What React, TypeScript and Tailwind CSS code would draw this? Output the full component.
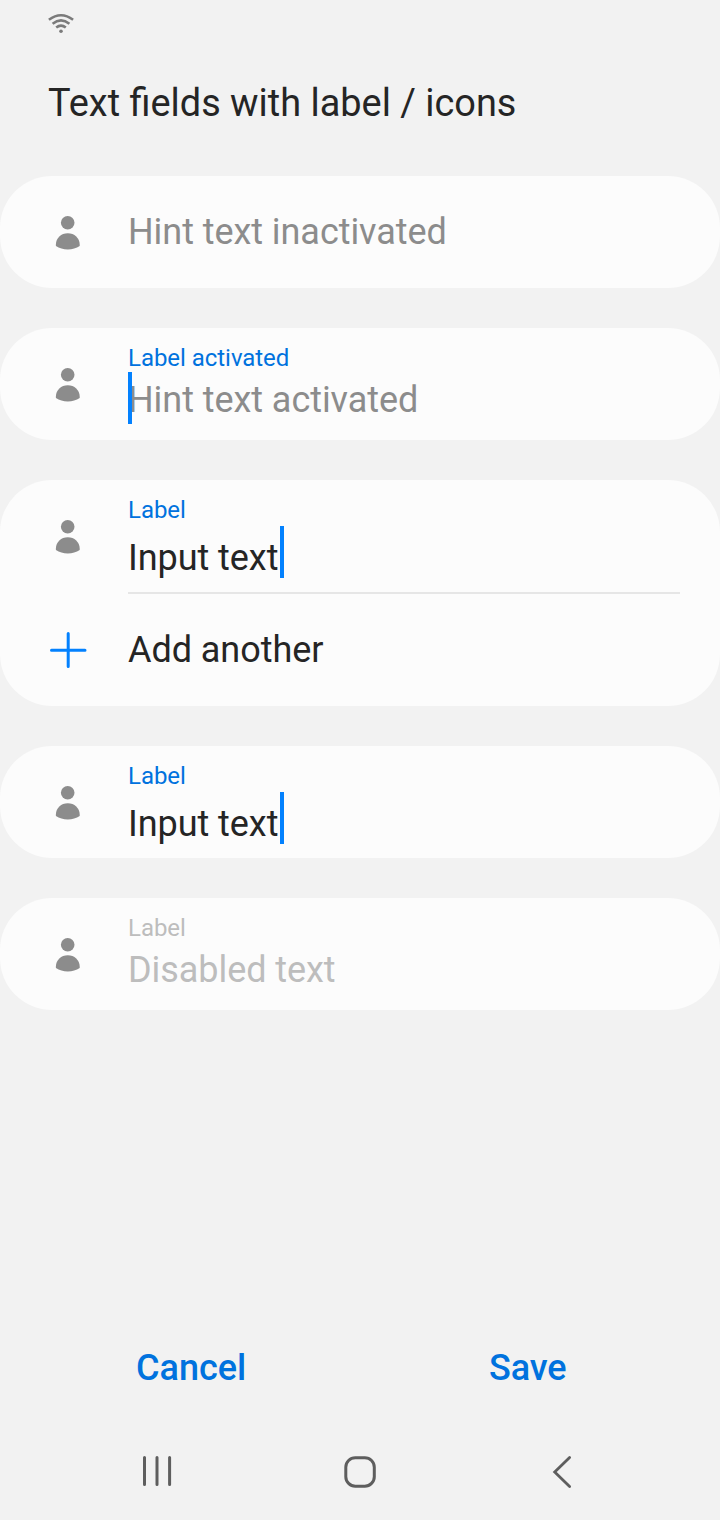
import React from "react";

function Person() {
  return (
    <svg className="block h-12 w-12" viewBox="0 0 48 48" fill="#8c8c8c">
      <circle cx="23.7" cy="14.7" r="6.8" />
      <path d="M11.9 36.6C11.9 30 17.2 25.2 23.8 25.2S35.7 30 35.7 36.6v1.5c-3.4 2.3-7.4 3.4-11.9 3.4s-8.5-1.1-11.9-3.4z" />
    </svg>
  );
}

function Caret({ className = "" }: { className?: string }) {
  return <span className={"relative z-10 block h-[52px] w-1 shrink-0 bg-[#0381fe] " + className} />;
}

type FieldProps = {
  label?: string;
  text: string;
  color: string;
  labelColor?: string;
  caret?: "start" | "end";
  rowClass?: string;
  textClass?: string;
};

function Field({ label, text, color, labelColor = "", caret, rowClass = "", textClass = "" }: FieldProps) {
  return (
    <div className="flex h-28 items-start pl-11">
      <div className="mt-8 w-[84px] shrink-0">
        <Person />
      </div>
      <div className="flex min-w-0 flex-1 flex-col">
        {label && <span className={"mt-4 h-7 text-[24px] leading-7 tracking-[-0.04px] " + labelColor}>{label}</span>}
        <div className={"flex h-[52px] text-[36px] leading-[52px] tracking-[-0.06px] whitespace-nowrap " + color + " " + rowClass}>
          {caret === "start" && <Caret className="-mr-1" />}
          <span className={textClass}>{text}</span>
          {caret === "end" && <Caret className="ml-[1.5px]" />}
        </div>
      </div>
    </div>
  );
}

function InputField() {
  return (
    <Field
      label="Label"
      labelColor="text-[#0072de]"
      text="Input text"
      color="text-[#252525]"
      caret="end"
      rowClass="mt-[2px]"
      textClass="pt-1.5"
    />
  );
}

const card = "rounded-[52px] bg-[#fcfcfc]";

export default function App() {
  return (
    <div className="flex h-[1520px] w-[720px] flex-col overflow-hidden bg-[#f2f2f2] font-['Roboto',sans-serif] text-[#252525]">
      <header className="flex h-12 shrink-0 items-start pl-12 pt-3">
        <svg className="h-6 w-[26px]" viewBox="0 0 26 24" fill="none" stroke="#7b7b7b" strokeWidth="2.6">
          <path d="M.9 7.8Q13-1.3 25.1 7.8M4.6 11.7Q13 5.1 21.4 11.7M8.2 15.5Q13 11.7 17.8 15.5" />
          <circle cx="13" cy="19.3" r="1.8" fill="#7b7b7b" stroke="none" />
        </svg>
      </header>
      <h1 className="h-32 shrink-0 pl-12 pt-8 text-[37.9px] leading-[46px]">Text fields with label / icons</h1>
      <main className="flex flex-col gap-10">
        <section className={card}>
          <Field text="Hint text inactivated" color="text-[#8c8c8c]" rowClass="mt-[30px]" />
        </section>
        <section className={card}>
          <Field
            label="Label activated"
            labelColor="text-[#0072de]"
            text="Hint text activated"
            color="text-[#8c8c8c]"
            caret="start"
            textClass="pt-0.5"
          />
        </section>
        <section className={card}>
          <InputField />
          <div className="ml-32 mr-10 h-0.5 bg-[#e6e6e6]" />
          <div className="flex h-28 items-center pl-11">
            <svg className="h-12 w-12" viewBox="0 0 48 48" stroke="#0381fe" strokeWidth="3" strokeLinecap="round">
              <path d="M24.2 7.5v33M7.5 24.2h33.5" />
            </svg>
            <span className="ml-9 text-[36px] tracking-[-0.05px]">Add another</span>
          </div>
        </section>
        <section className={card}>
          <InputField />
        </section>
        <section className={card}>
          <Field label="Label" labelColor="text-[#bdbdbd]" text="Disabled text" color="text-[#bdbdbd]" textClass="pt-0.5" />
        </section>
      </main>
      <div className="mt-auto flex h-[72px] shrink-0 items-center text-[36px] font-medium text-[#0072de]">
        <button className="ml-[136px] w-[353px] text-left">Cancel</button>
        <button className="tracking-[-0.1px]">Save</button>
      </div>
      <nav className="mt-5 flex h-24 shrink-0 items-center justify-center gap-[155px]">
        <svg className="h-12 w-12" viewBox="0 0 48 48" stroke="#5e5e5e" strokeWidth="3" strokeLinecap="round">
          <path d="M11.5 9.5v27M24 9.5v27M36.6 9.5v27" />
        </svg>
        <svg className="h-12 w-12" viewBox="0 0 48 48" stroke="#5e5e5e" strokeWidth="3" fill="none">
          <rect x="9.8" y="9.7" width="28.5" height="28.5" rx="9.5" />
        </svg>
        <svg className="h-12 w-12" viewBox="0 0 48 48" stroke="#5e5e5e" strokeWidth="2.8" fill="none" strokeLinecap="round">
          <path d="M30.6 9.4 15.7 24l14.9 14.6" />
        </svg>
      </nav>
    </div>
  );
}
